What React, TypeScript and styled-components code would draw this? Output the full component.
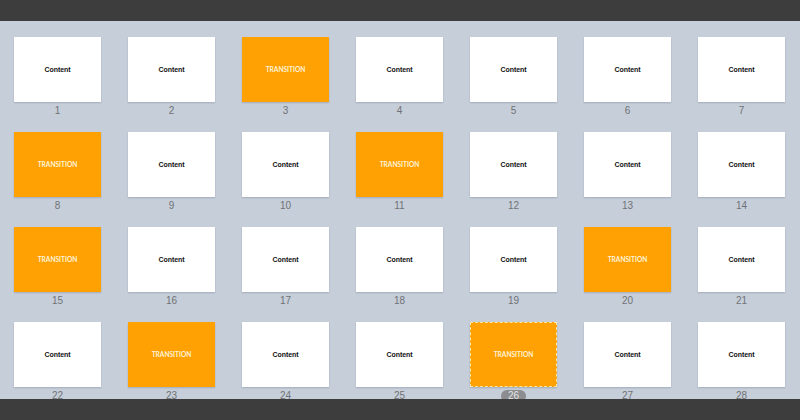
import React from "react";
import styled, { createGlobalStyle } from "styled-components";

const Global = createGlobalStyle`
  html, body { margin: 0; padding: 0; }
  body { width: 800px; height: 420px; overflow: hidden; background: #c6ced9; font-family: "Liberation Sans", Arial, sans-serif; }
`;

const Page = styled.div`
  width: 800px;
  height: 420px;
  display: flex;
  flex-direction: column;
  background: #c6ced9;
`;

const Bar = styled.div`
  height: 21px;
  flex: none;
  background: #3d3d3d;
`;

const Scroller = styled.div`
  flex: 1;
  overflow: hidden;
`;

const Grid = styled.div`
  display: grid;
  grid-template-columns: repeat(7, 87px);
  grid-auto-rows: 95px;
  column-gap: 27px;
  padding: 16px 0 0 14px;
`;

const Cell = styled.div`
  display: flex;
  flex-direction: column;
  align-items: center;
`;

const Slide = styled.div<{ $transition: boolean; $selected: boolean }>`
  box-sizing: border-box;
  width: 87px;
  height: 65px;
  display: flex;
  align-items: center;
  justify-content: center;
  background: ${(p) => (p.$transition ? "#ffa102" : "#ffffff")};
  box-shadow: 0 1px 1.5px rgba(60, 70, 90, 0.25);
  border: ${(p) => (p.$selected ? "1px dashed #ffe7a6" : "none")};
`;

const ContentText = styled.span`
  font-family: "Liberation Sans", Arial, sans-serif;
  font-weight: 700;
  font-size: 7px;
  color: #111;
  letter-spacing: -0.05px;
`;

const TransitionText = styled.span`
  font-family: "Lato", "Liberation Sans", sans-serif;
  font-weight: 700;
  font-size: 6.6px;
  color: #fff3dc;
  margin-top: -1px;
`;

const Label = styled.div<{ $selected: boolean }>`
  margin-top: 3px;
  height: 12px;
  line-height: 12px;
  font-size: 10px;
  font-family: "Liberation Sans", Arial, sans-serif;
  color: ${(p) => (p.$selected ? "#e4e4e4" : "#707276")};
  padding: 0 ${(p) => (p.$selected ? "6px" : "0")};
  border-radius: 6px;
  background: ${(p) => (p.$selected ? "#8b8d90" : "transparent")};
  min-width: ${(p) => (p.$selected ? "13px" : "0")};
  text-align: center;
`;

const transitions = new Set([3, 8, 11, 15, 20, 23, 26]);
const selected = 26;

export default function App() {
  const slides = Array.from({ length: 28 }, (_, i) => i + 1);
  return (
    <Page>
      <Global />
      <Bar />
      <Scroller>
        <Grid>
          {slides.map((n) => {
            const t = transitions.has(n);
            const s = n === selected;
            return (
              <Cell key={n}>
                <Slide $transition={t} $selected={s}>
                  {t ? <TransitionText>TRANSITION</TransitionText> : <ContentText>Content</ContentText>}
                </Slide>
                <Label $selected={s}>{n}</Label>
              </Cell>
            );
          })}
        </Grid>
      </Scroller>
      <Bar />
    </Page>
  );
}
